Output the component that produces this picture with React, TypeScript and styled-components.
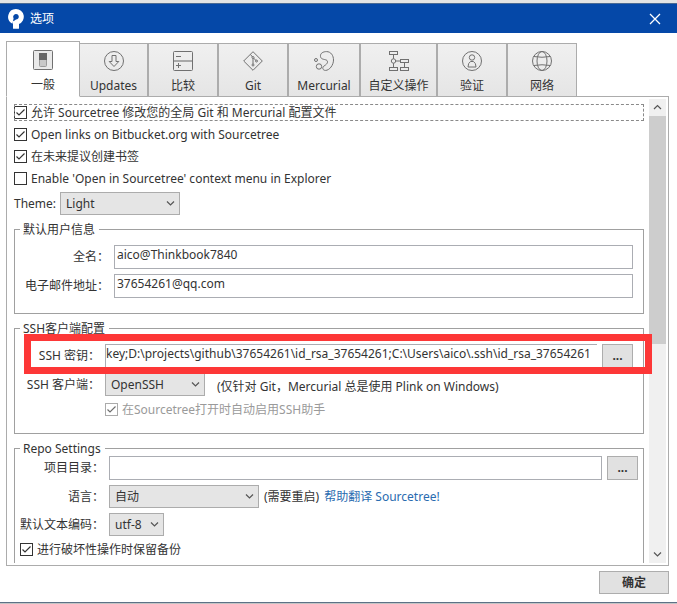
import React, { useId, useState } from "react";
import styled, { createGlobalStyle, css } from "styled-components";

const GlobalStyle = createGlobalStyle`
  *, *::before, *::after { box-sizing: border-box; }
  body {
    margin: 0;
    background: #fff;
    color: #333;
    font-family: "Noto Sans", "Noto Sans CJK SC", sans-serif;
    font-size: 12px;
    line-height: 18px;
  }
  button, input, select { font: inherit; color: inherit; margin: 0; }
`;

const Window = styled.div`
  display: flex;
  flex-direction: column;
  height: 100vh;
  border-top: 3px solid #e4e4e4;
  border-bottom: 1px solid #c4c4c4;
`;

const TitleBar = styled.header`
  display: flex;
  align-items: center;
  gap: 6px;
  flex: none;
  height: 30px;
  padding: 0 16px 0 8px;
  border-top: 1px solid #4a6a94;
  background: #0548a8;
  color: #fff;
`;

const Title = styled.h1`
  flex: 1;
  margin: 0;
  font-size: 12px;
  font-weight: 400;
`;

const CloseButton = styled.button`
  display: flex;
  padding: 0;
  border: 0;
  background: none;
  color: #fff;
`;

const Main = styled.main`
  display: flex;
  flex: 1;
  flex-direction: column;
  min-height: 0;
  padding: 8px 8px 8px 6px;
  border-bottom: 1px solid #5d7186;
`;

const TabList = styled.div`
  display: flex;
  align-items: flex-end;
  flex: none;
  z-index: 1;
`;

const Tab = styled.button<{ $width: number; $active?: boolean }>`
  display: flex;
  flex: 0 0 ${(p) => p.$width}px;
  flex-direction: column;
  align-items: center;
  gap: 6px;
  height: 54px;
  padding: 7px 0 0;
  border: 1px solid #acacac;
  background: linear-gradient(#f0f0f0, #e5e5e5);
  white-space: nowrap;
  ${(p) =>
    p.$active &&
    css`
      height: 56px;
      padding-top: 8px;
      border-bottom-color: #fff;
      background: #fff;
      & + button { border-left: 0; }
    `}
  svg { flex: none; }
`;

const Panel = styled.section`
  position: relative;
  display: flex;
  flex: 1;
  min-height: 0;
  margin-top: -1px;
  padding: 2px;
  border: 1px solid #acacac;
`;

const Content = styled.form`
  flex: 1;
  min-width: 0;
  padding: 5px 5px 0;
  overflow-y: auto;
  scrollbar-width: none;
`;

const ScrollBar = styled.div`
  display: flex;
  flex: none;
  flex-direction: column;
  width: 17px;
  background: #f0f0f0;
`;

const ScrollButton = styled.button`
  display: flex;
  align-items: center;
  justify-content: center;
  flex: none;
  height: 17px;
  padding: 0;
  border: 0;
  background: none;
`;

const ScrollTrack = styled.div`
  flex: 1;
`;

const ScrollThumb = styled.div`
  height: 53%;
  background: #cdcdcd;
`;

const CheckList = styled.div`
  display: flex;
  flex-direction: column;
  gap: 5px;
`;

const CheckLabel = styled.label<{ $focused?: boolean; $disabled?: boolean }>`
  display: flex;
  align-items: center;
  gap: 4px;
  line-height: 17px;
  outline: ${(p) => (p.$focused ? "1px dashed #8a8a8a" : "none")};
  outline-offset: -1px;
  color: ${(p) => (p.$disabled ? "#9a9a9a" : "inherit")};
`;

const CheckBox = styled.input`
  appearance: none;
  flex: none;
  width: 13px;
  height: 13px;
  border: 1px solid #333;
  background: #fff;
  &:checked {
    background: #fff
      url("data:image/svg+xml,%3Csvg xmlns='http://www.w3.org/2000/svg' viewBox='0 0 11 11'%3E%3Cpath d='M1.5 5.5L4 8L9.5 2.5' fill='none' stroke='%23333' stroke-width='1.2'/%3E%3C/svg%3E");
  }
  &:disabled { border-color: #888; opacity: 0.7; }
`;

const ThemeRow = styled.div`
  display: flex;
  align-items: center;
  gap: 4px;
  margin-top: 5px;
`;

const SelectBox = styled.span<{ $width: number }>`
  position: relative;
  display: inline-flex;
  flex: none;
  width: ${(p) => p.$width}px;
  svg {
    position: absolute;
    top: 8px;
    right: 5px;
    pointer-events: none;
  }
`;

const NativeSelect = styled.select`
  appearance: none;
  width: 100%;
  height: 23px;
  padding: 0 16px 0 5px;
  border: 1px solid #acacac;
  border-radius: 0;
  background: #e5e5e5;
`;

const Group = styled.fieldset`
  min-width: 0;
  margin: 7px 0 0;
  padding: 0 5px;
  border: 1px solid #a0a0a0;
  &:last-child { padding-bottom: 15px; }
`;

const Legend = styled.legend`
  height: 15px;
  padding: 0 4px 0 3px;
  line-height: 15px;
`;

const Fields = styled.div<{ $label: number; $inset?: boolean }>`
  display: grid;
  grid-template-columns: ${(p) => p.$label}px minmax(0, 1fr);
  align-items: center;
  gap: 5px;
  padding: ${(p) => (p.$inset ? "8px 5px 15px 3px" : "0 0 5px")};
`;

const FieldLabel = styled.label`
  text-align: right;
  white-space: nowrap;
`;

const Line = styled.div<{ $wide?: boolean }>`
  display: flex;
  align-items: ${(p) => (p.$wide ? "flex-end" : "center")};
  gap: ${(p) => (p.$wide ? 12 : 5)}px;
`;

const TextInput = styled.input<{ $open?: boolean }>`
  flex: 1;
  min-width: 0;
  width: 100%;
  height: 24px;
  padding: 0 2px 5px;
  border: 1px solid #abadb3;
  border-radius: 0;
  background: #fff;
  ${(p) =>
    p.$open &&
    css`
      padding: 0 0 5px;
      border-right: 0;
    `}
`;

const PushButton = styled.button`
  flex: none;
  width: 31px;
  height: 24px;
  padding: 0;
  border: 1px solid #adadad;
  background: #e1e1e1;
  font-weight: 700;
`;

const ConfirmButton = styled(PushButton)`
  width: 70px;
  height: 23px;
`;

const TranslateLink = styled.a`
  color: #2a6bb0;
  text-decoration: none;
`;

const Highlight = styled.div`
  position: absolute;
  top: 237px;
  left: 17px;
  right: 16px;
  height: 40px;
  border: 7px solid #fd3737;
  pointer-events: none;
`;

const Footer = styled.footer`
  display: flex;
  justify-content: flex-end;
  flex: none;
  padding-top: 5px;
`;

const Chevron = ({ up = false }: { up?: boolean }) => (
  <svg width="9" height="7" viewBox="0 0 9 7" fill="none" stroke="#555" strokeWidth="1.2">
    <path d={up ? "M1 5L4.5 1.5L8 5" : "M1 1.5L4.5 5L8 1.5"} />
  </svg>
);

const Logo = () => (
  <svg width="16" height="20" viewBox="0 0 16 20" aria-hidden="true">
    <path
      fill="#fff"
      fillRule="evenodd"
      d="M8 0a7.8 7.8 0 0 1 3 15v4.3a.5.5 0 0 1-.5.5h-5a.5.5 0 0 1-.5-.5V12.2A5 5 0 0 0 8 10.6a2.8 2.8 0 1 0-2.400-1.300L4.500 14.800A7.800 7.800 0 0 1 8 0z"
    />
  </svg>
);

const iconShapes: Record<string, React.ReactNode> = {
  general: (
    <>
      <rect x="0.5" y="0.5" width="19" height="19" rx="1" fill="#e9e9e9" />
      <rect x="6.5" y="3.5" width="7" height="13" rx="1" fill="#c8c8c8" stroke="#999" />
      <rect x="6.5" y="3.5" width="7" height="6" fill="#666" stroke="#666" />
    </>
  ),
  updates: (
    <>
      <circle cx="10" cy="10" r="9.5" />
      <path d="M8 4.5h4v6h2.8L10 15.5L5.2 10.5H8z" />
    </>
  ),
  diff: (
    <>
      <rect x="0.5" y="0.5" width="19" height="19" rx="1" />
      <path d="M1 10h18" stroke="#a8a8a8" strokeWidth="2" />
      <path d="M3 5.5h5M3 14.5h5M5.5 12v5" />
    </>
  ),
  git: (
    <>
      <path d="M10 0.7L19.3 10L10 19.3L0.7 10z" />
      <circle cx="10" cy="14" r="1" />
      <circle cx="10" cy="6.5" r="1" />
      <circle cx="13.5" cy="10" r="1" />
      <path d="M7.500 3.500L9.500 6M10 7.500V13M10.500 7L13 9.500" />
    </>
  ),
  mercurial: (
    <>
      <path d="M6.500 5.500C6 2 9.500 .6 12.500 .6c4.500 0 7 4 7 8.400c0 5-4 10.400-8 10.400c-3 0-3.500-3-1.500-4.400c2.500-1.500 4.500-3.500 3-5.500C11.500 8 7 9 6.500 5.500z" />
      <circle cx="5" cy="15.5" r="2.7" />
      <circle cx="2" cy="9" r="1.5" />
    </>
  ),
  actions: (
    <>
      <rect x="0.5" y="0.5" width="8" height="3" />
      <rect x="11.5" y="8.5" width="8" height="3" />
      <rect x="0.5" y="16.5" width="8" height="3" />
      <rect x="11.5" y="16.5" width="8" height="3" />
      <circle cx="4.5" cy="10" r="2.2" />
      <path d="M4.500 3.500V7.800M4.500 12.200V16.500M6.700 10H11.500M15.500 11.500V16.500" />
    </>
  ),
  auth: (
    <>
      <circle cx="10" cy="10" r="9.5" />
      <circle cx="10" cy="6.5" r="2.7" />
      <path d="M8.500 10.500h3Q14 12 14 16H6Q6 12 8.500 10.500z" strokeLinejoin="round" />
    </>
  ),
  network: (
    <>
      <circle cx="10" cy="10" r="9.5" />
      <ellipse cx="10" cy="10" rx="5" ry="9.5" />
      <path d="M1.500 5.500q8.500 1.500 17 0M1.500 14.500q8.500-1.500 17 0" />
    </>
  ),
};

const TabIcon = ({ name }: { name: string }) => (
  <svg width="20" height="20" viewBox="0 0 20 20" fill="none" stroke="#707070" aria-hidden="true">
    {iconShapes[name]}
  </svg>
);

const tabs = [
  { icon: "general", label: "一般", width: 74 },
  { icon: "updates", label: "Updates", width: 68 },
  { icon: "diff", label: "比较", width: 70 },
  { icon: "git", label: "Git", width: 70 },
  { icon: "mercurial", label: "Mercurial", width: 72 },
  { icon: "actions", label: "自定义操作", width: 77 },
  { icon: "auth", label: "验证", width: 70 },
  { icon: "network", label: "网络", width: 70 },
];

type CheckProps = { label: string; checked?: boolean; focused?: boolean; disabled?: boolean };

const Check = ({ label, checked, focused, disabled }: CheckProps) => (
  <CheckLabel $focused={focused} $disabled={disabled}>
    <CheckBox type="checkbox" defaultChecked={checked} disabled={disabled} />
    {label}
  </CheckLabel>
);

const Select = ({ id, width, options }: { id: string; width: number; options: string[] }) => (
  <SelectBox $width={width}>
    <NativeSelect id={id}>
      {options.map((o) => (
        <option key={o}>{o}</option>
      ))}
    </NativeSelect>
    <Chevron />
  </SelectBox>
);

export default function App() {
  const [active, setActive] = useState("general");
  const id = useId();
  return (
    <>
      <GlobalStyle />
      <Window>
        <TitleBar>
          <Logo />
          <Title>选项</Title>
          <CloseButton type="button" aria-label="关闭">
            <svg width="12" height="12" viewBox="0 0 12 12" stroke="currentColor" strokeWidth="1.3">
              <path d="M1 1L11 11M11 1L1 11" />
            </svg>
          </CloseButton>
        </TitleBar>
        <Main>
          <TabList role="tablist">
            {tabs.map((t) => (
              <Tab
                key={t.icon}
                type="button"
                role="tab"
                aria-selected={t.icon === active}
                $active={t.icon === active}
                $width={t.width}
                onClick={() => setActive(t.icon)}
              >
                <TabIcon name={t.icon} />
                {t.label}
              </Tab>
            ))}
          </TabList>
          <Panel role="tabpanel">
            <Content>
              <CheckList>
                <Check label="允许 Sourcetree 修改您的全局 Git 和 Mercurial 配置文件" checked focused />
                <Check label="Open links on Bitbucket.org with Sourcetree" checked />
                <Check label="在未来提议创建书签" checked />
                <Check label="Enable 'Open in Sourcetree' context menu in Explorer" />
              </CheckList>
              <ThemeRow>
                <label htmlFor={id + "theme"}>Theme:</label>
                <Select id={id + "theme"} width={120} options={["Light", "Dark"]} />
              </ThemeRow>
              <Group>
                <Legend>默认用户信息</Legend>
                <Fields $label={86} $inset>
                  <FieldLabel htmlFor={id + "name"}>全名：</FieldLabel>
                  <TextInput id={id + "name"} defaultValue="aico@Thinkbook7840" />
                  <FieldLabel htmlFor={id + "mail"}>电子邮件地址：</FieldLabel>
                  <TextInput id={id + "mail"} defaultValue="37654261@qq.com" />
                </Fields>
              </Group>
              <Group>
                <Legend>SSH客户端配置</Legend>
                <Fields $label={77} $inset>
                  <FieldLabel htmlFor={id + "key"}>SSH 密钥：</FieldLabel>
                  <Line>
                    <TextInput
                      id={id + "key"}
                      $open
                      defaultValue="key;D:\projects\github\37654261\id_rsa_37654261;C:\Users\aico\.ssh\id_rsa_37654261"
                    />
                    <PushButton type="button">...</PushButton>
                  </Line>
                  <FieldLabel htmlFor={id + "client"}>SSH 客户端：</FieldLabel>
                  <Line $wide>
                    <Select id={id + "client"} width={100} options={["OpenSSH", "PuTTY / Plink"]} />
                    <span>(仅针对 Git，Mercurial 总是使用 Plink on Windows)</span>
                  </Line>
                  <span />
                  <Check label="在Sourcetree打开时自动启用SSH助手" checked disabled />
                </Fields>
              </Group>
              <Group>
                <Legend>Repo Settings</Legend>
                <Fields $label={84}>
                  <FieldLabel htmlFor={id + "dir"}>项目目录：</FieldLabel>
                  <Line>
                    <TextInput id={id + "dir"} />
                    <PushButton type="button">...</PushButton>
                  </Line>
                  <FieldLabel htmlFor={id + "lang"}>语言：</FieldLabel>
                  <Line>
                    <Select id={id + "lang"} width={150} options={["自动", "English"]} />
                    <span>(需要重启)</span>
                    <TranslateLink href="#translate">帮助翻译 Sourcetree!</TranslateLink>
                  </Line>
                  <FieldLabel htmlFor={id + "enc"}>默认文本编码：</FieldLabel>
                  <Line>
                    <Select id={id + "enc"} width={55} options={["utf-8", "gbk"]} />
                  </Line>
                </Fields>
                <Check label="进行破坏性操作时保留备份" checked />
              </Group>
            </Content>
            <ScrollBar>
              <ScrollButton type="button" aria-label="向上滚动"><Chevron up /></ScrollButton>
              <ScrollTrack><ScrollThumb /></ScrollTrack>
              <ScrollButton type="button" aria-label="向下滚动"><Chevron /></ScrollButton>
            </ScrollBar>
            <Highlight />
          </Panel>
          <Footer>
            <ConfirmButton type="button">确定</ConfirmButton>
          </Footer>
        </Main>
      </Window>
    </>
  );
}
